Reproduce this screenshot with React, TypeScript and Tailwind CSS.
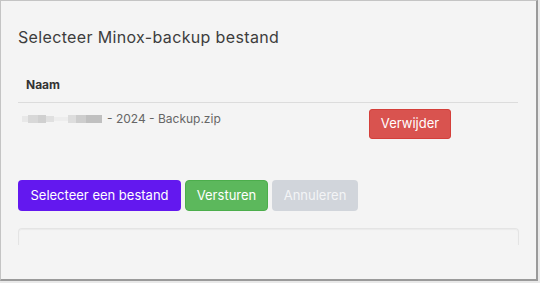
export default function App() {
  return (
    <div className="w-[540px] h-[283px] bg-[#e9e9e9] font-['Inter',sans-serif]">
      <div className="w-[538px] h-[281px] bg-[#f4f4f4] border border-[#c4c4c4] border-r-2 border-b-2 border-r-[#9a9a9a] border-b-[#9a9a9a] px-[17px] pt-[26px]">
        <h1 className="text-[16px] leading-5 text-[#3d3d3d] tracking-[0.35px]">Selecteer Minox-backup bestand</h1>

        <div className="mt-[30px] mr-[1px]">
          <div className="border-b border-[#dcdcdc] pl-2 pb-[9px] text-[12px] leading-4 font-bold text-[#333]">Naam</div>
          <div className="flex items-start pt-[6px]">
            <div className="w-[351px] flex items-center pl-1 pt-[2px] text-[12px] leading-4 text-[#666]">
              <span className="flex items-center h-[8px] mr-[5px] opacity-80 blur-[0.6px]">
                <span className="w-[6px] h-[6px] bg-[#e6e6e6]" />
                <span className="w-[10px] h-[8px] bg-[#d2d2d2]" />
                <span className="w-[8px] h-[8px] bg-[#c8c8c8]" />
                <span className="w-[8px] h-[6px] bg-[#dcdcdc]" />
                <span className="w-[14px] h-[4px] bg-[#ececec]" />
                <span className="w-[8px] h-[8px] bg-[#d8d8d8]" />
                <span className="w-[10px] h-[8px] bg-[#c4c4c4]" />
                <span className="w-[16px] h-[8px] bg-[#b4b4b4]" />
              </span>
              - 2024 - Backup.zip
            </div>
            <button className="h-[30px] w-[82px] rounded-[3px] bg-[#d9534f] border border-[#d43f3a] text-white text-[13px]">Verwijder</button>
          </div>
        </div>

        <div className="flex gap-1 mt-[41px] text-[13px]">
          <button className="h-[31px] w-[163px] rounded-[4px] bg-[#6318ef] text-white">Selecteer een bestand</button>
          <button className="h-[31px] w-[83px] rounded-[4px] bg-[#5cb85c] border border-[#4cae4c] text-white">Versturen</button>
          <button className="h-[31px] w-[86px] rounded-[4px] bg-[#d1d5db] text-[#f3f4f6]">Annuleren</button>
        </div>

        <div className="mt-[17px] h-[17px] rounded-t-[4px] border border-b-0 border-[#e4e4e4] shadow-[inset_0_1px_1px_rgba(0,0,0,0.04)]" />
      </div>
    </div>
  );
}
